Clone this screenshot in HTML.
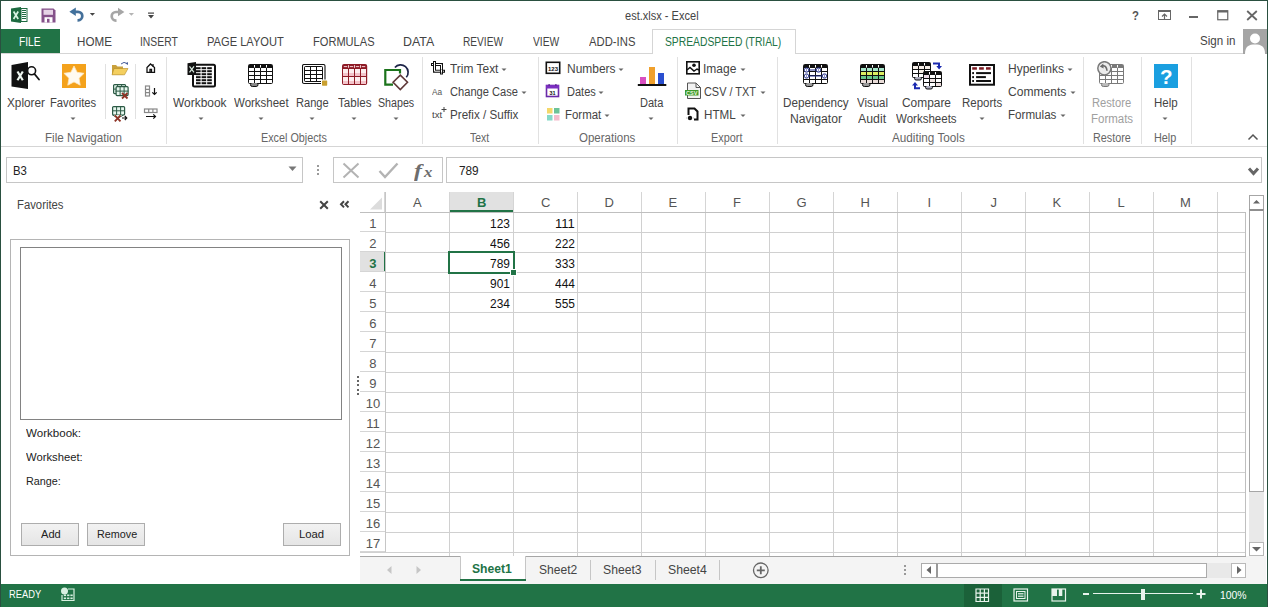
<!DOCTYPE html><html><head><meta charset="utf-8"><style>
html,body{margin:0;padding:0;width:1268px;height:607px;overflow:hidden;background:#fff}
body{position:relative;font-family:"Liberation Sans",sans-serif}
span{display:block}
</style></head><body>
<div style="position:absolute;left:0px;top:0px;width:1268px;height:607px;background:#fff"></div>
<span id="t0" style="position:absolute;left:625.00px;top:10.04px;font:normal 12px/12px 'Liberation Sans',sans-serif;color:#444;white-space:pre;transform:scaleX(0.9200);transform-origin:0 0;">est.xlsx - Excel</span>
<div style="position:absolute;left:0px;top:29px;width:60px;height:25px;background:#217346"></div>
<span id="t1" style="position:absolute;left:19.22px;top:35.30px;font:normal 13px/13px 'Liberation Sans',sans-serif;color:#fff;white-space:pre;transform:scaleX(0.7841);transform-origin:0 0;">FILE</span>
<span id="t2" style="position:absolute;left:76.51px;top:35.30px;font:normal 13px/13px 'Liberation Sans',sans-serif;color:#444;white-space:pre;transform:scaleX(0.8949);transform-origin:0 0;">HOME</span>
<span id="t3" style="position:absolute;left:140.20px;top:35.30px;font:normal 13px/13px 'Liberation Sans',sans-serif;color:#444;white-space:pre;transform:scaleX(0.7958);transform-origin:0 0;">INSERT</span>
<span id="t4" style="position:absolute;left:207.14px;top:35.30px;font:normal 13px/13px 'Liberation Sans',sans-serif;color:#444;white-space:pre;transform:scaleX(0.8551);transform-origin:0 0;">PAGE LAYOUT</span>
<span id="t5" style="position:absolute;left:313.15px;top:35.30px;font:normal 13px/13px 'Liberation Sans',sans-serif;color:#444;white-space:pre;transform:scaleX(0.8524);transform-origin:0 0;">FORMULAS</span>
<span id="t6" style="position:absolute;left:403.05px;top:35.30px;font:normal 13px/13px 'Liberation Sans',sans-serif;color:#444;white-space:pre;transform:scaleX(0.9542);transform-origin:0 0;">DATA</span>
<span id="t7" style="position:absolute;left:463.22px;top:35.30px;font:normal 13px/13px 'Liberation Sans',sans-serif;color:#444;white-space:pre;transform:scaleX(0.7802);transform-origin:0 0;">REVIEW</span>
<span id="t8" style="position:absolute;left:532.80px;top:35.30px;font:normal 13px/13px 'Liberation Sans',sans-serif;color:#444;white-space:pre;transform:scaleX(0.7893);transform-origin:0 0;">VIEW</span>
<span id="t9" style="position:absolute;left:589.00px;top:35.30px;font:normal 13px/13px 'Liberation Sans',sans-serif;color:#444;white-space:pre;transform:scaleX(0.8684);transform-origin:0 0;">ADD-INS</span>
<div style="position:absolute;left:0px;top:53px;width:1268px;height:1px;background:#d5d5d5"></div>
<div style="position:absolute;left:652px;top:29px;width:144px;height:25px;background:#fff;border:1px solid #d5d5d5;border-bottom:none;box-sizing:border-box"></div>
<span id="t10" style="position:absolute;left:665.00px;top:35.30px;font:normal 13px/13px 'Liberation Sans',sans-serif;color:#217346;white-space:pre;transform:scaleX(0.7928);transform-origin:0 0;">SPREADSPEED (TRIAL)</span>
<span id="t11" style="position:absolute;left:1200.30px;top:34.00px;font:normal 13px/13px 'Liberation Sans',sans-serif;color:#444;white-space:pre;transform:scaleX(0.8907);transform-origin:0 0;">Sign in</span>
<div style="position:absolute;left:0px;top:146px;width:1268px;height:1px;background:#d5d5d5"></div>
<div style="position:absolute;left:166px;top:57px;width:1px;height:87px;background:#e1e1e1"></div>
<div style="position:absolute;left:422px;top:57px;width:1px;height:87px;background:#e1e1e1"></div>
<div style="position:absolute;left:538px;top:57px;width:1px;height:87px;background:#e1e1e1"></div>
<div style="position:absolute;left:677px;top:57px;width:1px;height:87px;background:#e1e1e1"></div>
<div style="position:absolute;left:777px;top:57px;width:1px;height:87px;background:#e1e1e1"></div>
<div style="position:absolute;left:1083px;top:57px;width:1px;height:87px;background:#e1e1e1"></div>
<div style="position:absolute;left:1141px;top:57px;width:1px;height:87px;background:#e1e1e1"></div>
<div style="position:absolute;left:1191px;top:57px;width:1px;height:87px;background:#e1e1e1"></div>
<div style="position:absolute;left:105px;top:64px;width:1px;height:55px;background:#e1e1e1"></div>
<div style="position:absolute;left:135px;top:64px;width:1px;height:55px;background:#e1e1e1"></div>
<span id="t12" style="position:absolute;left:45.30px;top:131.84px;font:normal 12px/12px 'Liberation Sans',sans-serif;color:#666;white-space:pre;transform:scaleX(0.9695);transform-origin:0 0;">File Navigation</span>
<span id="t13" style="position:absolute;left:261.00px;top:131.84px;font:normal 12px/12px 'Liberation Sans',sans-serif;color:#666;white-space:pre;transform:scaleX(0.8997);transform-origin:0 0;">Excel Objects</span>
<span id="t14" style="position:absolute;left:470.00px;top:131.84px;font:normal 12px/12px 'Liberation Sans',sans-serif;color:#666;white-space:pre;transform:scaleX(0.8688);transform-origin:0 0;">Text</span>
<span id="t15" style="position:absolute;left:579.00px;top:131.84px;font:normal 12px/12px 'Liberation Sans',sans-serif;color:#666;white-space:pre;transform:scaleX(0.9591);transform-origin:0 0;">Operations</span>
<span id="t16" style="position:absolute;left:710.70px;top:131.84px;font:normal 12px/12px 'Liberation Sans',sans-serif;color:#666;white-space:pre;transform:scaleX(0.9053);transform-origin:0 0;">Export</span>
<span id="t17" style="position:absolute;left:892.30px;top:131.84px;font:normal 12px/12px 'Liberation Sans',sans-serif;color:#666;white-space:pre;transform:scaleX(0.9771);transform-origin:0 0;">Auditing Tools</span>
<span id="t18" style="position:absolute;left:1092.50px;top:131.84px;font:normal 12px/12px 'Liberation Sans',sans-serif;color:#666;white-space:pre;transform:scaleX(0.8998);transform-origin:0 0;">Restore</span>
<span id="t19" style="position:absolute;left:1154.40px;top:131.84px;font:normal 12px/12px 'Liberation Sans',sans-serif;color:#666;white-space:pre;transform:scaleX(0.9038);transform-origin:0 0;">Help</span>
<span id="t20" style="position:absolute;left:6.90px;top:96.64px;font:normal 12px/12px 'Liberation Sans',sans-serif;color:#444;white-space:pre;transform:scaleX(0.9796);transform-origin:0 0;">Xplorer</span>
<span id="t21" style="position:absolute;left:50.20px;top:96.64px;font:normal 12px/12px 'Liberation Sans',sans-serif;color:#444;white-space:pre;transform:scaleX(0.9362);transform-origin:0 0;">Favorites</span>
<span id="t22" style="position:absolute;left:173.20px;top:96.84px;font:normal 12px/12px 'Liberation Sans',sans-serif;color:#444;white-space:pre;transform:scaleX(0.9945);transform-origin:0 0;">Workbook</span>
<span id="t23" style="position:absolute;left:233.50px;top:96.84px;font:normal 12px/12px 'Liberation Sans',sans-serif;color:#444;white-space:pre;transform:scaleX(0.9567);transform-origin:0 0;">Worksheet</span>
<span id="t24" style="position:absolute;left:296.30px;top:96.84px;font:normal 12px/12px 'Liberation Sans',sans-serif;color:#444;white-space:pre;transform:scaleX(0.9247);transform-origin:0 0;">Range</span>
<span id="t25" style="position:absolute;left:338.40px;top:96.84px;font:normal 12px/12px 'Liberation Sans',sans-serif;color:#444;white-space:pre;transform:scaleX(0.9658);transform-origin:0 0;">Tables</span>
<span id="t26" style="position:absolute;left:378.30px;top:96.84px;font:normal 12px/12px 'Liberation Sans',sans-serif;color:#444;white-space:pre;transform:scaleX(0.8895);transform-origin:0 0;">Shapes</span>
<span id="t27" style="position:absolute;left:640.40px;top:96.84px;font:normal 12px/12px 'Liberation Sans',sans-serif;color:#444;white-space:pre;transform:scaleX(0.9192);transform-origin:0 0;">Data</span>
<span id="t28" style="position:absolute;left:783.20px;top:96.84px;font:normal 12px/12px 'Liberation Sans',sans-serif;color:#444;white-space:pre;transform:scaleX(0.9750);transform-origin:0 0;">Dependency</span>
<span id="t29" style="position:absolute;left:790.00px;top:112.84px;font:normal 12px/12px 'Liberation Sans',sans-serif;color:#444;white-space:pre;transform:scaleX(1.0124);transform-origin:0 0;">Navigator</span>
<span id="t30" style="position:absolute;left:857.00px;top:96.84px;font:normal 12px/12px 'Liberation Sans',sans-serif;color:#444;white-space:pre;transform:scaleX(0.9528);transform-origin:0 0;">Visual</span>
<span id="t31" style="position:absolute;left:858.00px;top:112.84px;font:normal 12px/12px 'Liberation Sans',sans-serif;color:#444;white-space:pre;transform:scaleX(1.0279);transform-origin:0 0;">Audit</span>
<span id="t32" style="position:absolute;left:902.00px;top:96.84px;font:normal 12px/12px 'Liberation Sans',sans-serif;color:#444;white-space:pre;transform:scaleX(0.9924);transform-origin:0 0;">Compare</span>
<span id="t33" style="position:absolute;left:896.40px;top:112.84px;font:normal 12px/12px 'Liberation Sans',sans-serif;color:#444;white-space:pre;transform:scaleX(0.9599);transform-origin:0 0;">Worksheets</span>
<span id="t34" style="position:absolute;left:962.00px;top:96.84px;font:normal 12px/12px 'Liberation Sans',sans-serif;color:#444;white-space:pre;transform:scaleX(0.9567);transform-origin:0 0;">Reports</span>
<span id="t35" style="position:absolute;left:1091.70px;top:96.84px;font:normal 12px/12px 'Liberation Sans',sans-serif;color:#a0a0a0;white-space:pre;transform:scaleX(0.9305);transform-origin:0 0;">Restore</span>
<span id="t36" style="position:absolute;left:1090.50px;top:112.84px;font:normal 12px/12px 'Liberation Sans',sans-serif;color:#a0a0a0;white-space:pre;transform:scaleX(0.9567);transform-origin:0 0;">Formats</span>
<span id="t37" style="position:absolute;left:1153.70px;top:96.84px;font:normal 12px/12px 'Liberation Sans',sans-serif;color:#444;white-space:pre;transform:scaleX(0.9598);transform-origin:0 0;">Help</span>
<span id="t38" style="position:absolute;left:449.70px;top:62.84px;font:normal 12px/12px 'Liberation Sans',sans-serif;color:#444;white-space:pre;transform:scaleX(0.9949);transform-origin:0 0;">Trim Text</span>
<span id="t39" style="position:absolute;left:449.70px;top:85.84px;font:normal 12px/12px 'Liberation Sans',sans-serif;color:#444;white-space:pre;transform:scaleX(0.9266);transform-origin:0 0;">Change Case</span>
<span id="t40" style="position:absolute;left:449.70px;top:109.14px;font:normal 12px/12px 'Liberation Sans',sans-serif;color:#444;white-space:pre;transform:scaleX(0.9692);transform-origin:0 0;">Prefix / Suffix</span>
<span id="t41" style="position:absolute;left:567.20px;top:62.84px;font:normal 12px/12px 'Liberation Sans',sans-serif;color:#444;white-space:pre;transform:scaleX(0.9984);transform-origin:0 0;">Numbers</span>
<span id="t42" style="position:absolute;left:567.20px;top:85.84px;font:normal 12px/12px 'Liberation Sans',sans-serif;color:#444;white-space:pre;transform:scaleX(0.9187);transform-origin:0 0;">Dates</span>
<span id="t43" style="position:absolute;left:564.60px;top:109.14px;font:normal 12px/12px 'Liberation Sans',sans-serif;color:#444;white-space:pre;transform:scaleX(0.9542);transform-origin:0 0;">Format</span>
<span id="t44" style="position:absolute;left:703.30px;top:62.84px;font:normal 12px/12px 'Liberation Sans',sans-serif;color:#444;white-space:pre;transform:scaleX(1.0007);transform-origin:0 0;">Image</span>
<span id="t45" style="position:absolute;left:704.30px;top:85.84px;font:normal 12px/12px 'Liberation Sans',sans-serif;color:#444;white-space:pre;transform:scaleX(0.9085);transform-origin:0 0;">CSV / TXT</span>
<span id="t46" style="position:absolute;left:704.30px;top:109.14px;font:normal 12px/12px 'Liberation Sans',sans-serif;color:#444;white-space:pre;transform:scaleX(0.9699);transform-origin:0 0;">HTML</span>
<span id="t47" style="position:absolute;left:1008.20px;top:62.84px;font:normal 12px/12px 'Liberation Sans',sans-serif;color:#444;white-space:pre;transform:scaleX(0.9979);transform-origin:0 0;">Hyperlinks</span>
<span id="t48" style="position:absolute;left:1008.20px;top:85.84px;font:normal 12px/12px 'Liberation Sans',sans-serif;color:#444;white-space:pre;transform:scaleX(1.0067);transform-origin:0 0;">Comments</span>
<span id="t49" style="position:absolute;left:1008.20px;top:109.14px;font:normal 12px/12px 'Liberation Sans',sans-serif;color:#444;white-space:pre;transform:scaleX(0.9678);transform-origin:0 0;">Formulas</span>
<div style="position:absolute;left:6px;top:157px;width:297px;height:26px;border:1px solid #c6c6c6;box-sizing:border-box;background:#fff"></div>
<span id="t50" style="position:absolute;left:13.40px;top:164.54px;font:normal 12px/12px 'Liberation Sans',sans-serif;color:#222;white-space:pre;transform:scaleX(0.9464);transform-origin:0 0;">B3</span>
<div style="position:absolute;left:333px;top:157px;width:110px;height:26px;border:1px solid #c6c6c6;box-sizing:border-box;background:#fff"></div>
<div style="position:absolute;left:446px;top:157px;width:816px;height:26px;border:1px solid #c6c6c6;box-sizing:border-box;background:#fff"></div>
<span id="t51" style="position:absolute;left:458.60px;top:164.64px;font:normal 12px/12px 'Liberation Sans',sans-serif;color:#222;white-space:pre;transform:scaleX(0.9829);transform-origin:0 0;">789</span>
<span id="t52" style="position:absolute;left:16.60px;top:198.84px;font:normal 12px/12px 'Liberation Sans',sans-serif;color:#444;white-space:pre;transform:scaleX(0.9423);transform-origin:0 0;">Favorites</span>
<div style="position:absolute;left:10px;top:239px;width:340px;height:317px;border:1px solid #b4b4b4;box-sizing:border-box"></div>
<div style="position:absolute;left:20px;top:247px;width:322px;height:173px;border:1px solid #828282;box-sizing:border-box"></div>
<span id="t53" style="position:absolute;left:25.50px;top:427.69px;font:normal 11px/11px 'Liberation Sans',sans-serif;color:#222;white-space:pre;transform:scaleX(1.0513);transform-origin:0 0;">Workbook:</span>
<span id="t54" style="position:absolute;left:25.50px;top:452.29px;font:normal 11px/11px 'Liberation Sans',sans-serif;color:#222;white-space:pre;transform:scaleX(1.0221);transform-origin:0 0;">Worksheet:</span>
<span id="t55" style="position:absolute;left:25.50px;top:476.19px;font:normal 11px/11px 'Liberation Sans',sans-serif;color:#222;white-space:pre;transform:scaleX(0.9798);transform-origin:0 0;">Range:</span>
<div style="position:absolute;left:21px;top:523px;width:58px;height:23px;border:1px solid #adadad;box-sizing:border-box;background:linear-gradient(#f2f2f2,#e5e5e5)"></div>
<span id="t56" style="position:absolute;left:40.60px;top:529.19px;font:normal 11px/11px 'Liberation Sans',sans-serif;color:#222;white-space:pre;transform:scaleX(1.0075);transform-origin:0 0;">Add</span>
<div style="position:absolute;left:87px;top:523px;width:58px;height:23px;border:1px solid #adadad;box-sizing:border-box;background:linear-gradient(#f2f2f2,#e5e5e5)"></div>
<span id="t57" style="position:absolute;left:96.50px;top:529.19px;font:normal 11px/11px 'Liberation Sans',sans-serif;color:#222;white-space:pre;transform:scaleX(0.9818);transform-origin:0 0;">Remove</span>
<div style="position:absolute;left:283px;top:523px;width:58px;height:23px;border:1px solid #adadad;box-sizing:border-box;background:linear-gradient(#f2f2f2,#e5e5e5)"></div>
<span id="t58" style="position:absolute;left:299.00px;top:529.19px;font:normal 11px/11px 'Liberation Sans',sans-serif;color:#222;white-space:pre;transform:scaleX(1.0266);transform-origin:0 0;">Load</span>
<div style="position:absolute;left:360px;top:192px;width:886px;height:20px;background:#fff"></div>
<div style="position:absolute;left:449px;top:192px;width:64px;height:20px;background:#e1e1e1"></div>
<div style="position:absolute;left:449px;top:210px;width:64px;height:2px;background:#217346"></div>
<div style="position:absolute;left:360px;top:252px;width:25px;height:20px;background:#e1e1e1"></div>
<div style="position:absolute;left:384px;top:252px;width:2px;height:20px;background:#217346"></div>
<div style="position:absolute;left:385px;top:212px;width:861px;height:344px;background-image:linear-gradient(to right,#d0d0d0 1px,transparent 1px),linear-gradient(to bottom,#d0d0d0 1px,transparent 1px);background-size:64px 20px;background-position:0 0"></div>
<div style="position:absolute;left:384px;top:192px;width:1px;height:20px;background:#d5d5d5"></div>
<div style="position:absolute;left:449px;top:192px;width:1px;height:20px;background:#d5d5d5"></div>
<div style="position:absolute;left:513px;top:192px;width:1px;height:20px;background:#d5d5d5"></div>
<div style="position:absolute;left:577px;top:192px;width:1px;height:20px;background:#d5d5d5"></div>
<div style="position:absolute;left:641px;top:192px;width:1px;height:20px;background:#d5d5d5"></div>
<div style="position:absolute;left:705px;top:192px;width:1px;height:20px;background:#d5d5d5"></div>
<div style="position:absolute;left:769px;top:192px;width:1px;height:20px;background:#d5d5d5"></div>
<div style="position:absolute;left:833px;top:192px;width:1px;height:20px;background:#d5d5d5"></div>
<div style="position:absolute;left:897px;top:192px;width:1px;height:20px;background:#d5d5d5"></div>
<div style="position:absolute;left:961px;top:192px;width:1px;height:20px;background:#d5d5d5"></div>
<div style="position:absolute;left:1025px;top:192px;width:1px;height:20px;background:#d5d5d5"></div>
<div style="position:absolute;left:1089px;top:192px;width:1px;height:20px;background:#d5d5d5"></div>
<div style="position:absolute;left:1153px;top:192px;width:1px;height:20px;background:#d5d5d5"></div>
<div style="position:absolute;left:1217px;top:192px;width:1px;height:20px;background:#d5d5d5"></div>
<div style="position:absolute;left:360px;top:212px;width:886px;height:1px;background:#bfbfbf"></div>
<div style="position:absolute;left:385px;top:192px;width:1px;height:364px;background:#c6c6c6"></div>
<div style="position:absolute;left:360px;top:552px;width:886px;height:1px;background:#d0d0d0"></div>
<div style="position:absolute;left:1245px;top:212px;width:1px;height:344px;background:#bfbfbf"></div>
<div style="position:absolute;left:385px;top:553px;width:860px;height:3px;background:#fff"></div>
<div style="position:absolute;left:449px;top:553px;width:1px;height:3px;background:#d0d0d0"></div>
<div style="position:absolute;left:513px;top:553px;width:1px;height:3px;background:#d0d0d0"></div>
<div style="position:absolute;left:577px;top:553px;width:1px;height:3px;background:#d0d0d0"></div>
<div style="position:absolute;left:641px;top:553px;width:1px;height:3px;background:#d0d0d0"></div>
<div style="position:absolute;left:705px;top:553px;width:1px;height:3px;background:#d0d0d0"></div>
<div style="position:absolute;left:769px;top:553px;width:1px;height:3px;background:#d0d0d0"></div>
<div style="position:absolute;left:833px;top:553px;width:1px;height:3px;background:#d0d0d0"></div>
<div style="position:absolute;left:897px;top:553px;width:1px;height:3px;background:#d0d0d0"></div>
<div style="position:absolute;left:961px;top:553px;width:1px;height:3px;background:#d0d0d0"></div>
<div style="position:absolute;left:1025px;top:553px;width:1px;height:3px;background:#d0d0d0"></div>
<div style="position:absolute;left:1089px;top:553px;width:1px;height:3px;background:#d0d0d0"></div>
<div style="position:absolute;left:1153px;top:553px;width:1px;height:3px;background:#d0d0d0"></div>
<div style="position:absolute;left:1217px;top:553px;width:1px;height:3px;background:#d0d0d0"></div>
<div style="position:absolute;left:360px;top:231px;width:25px;height:1px;background:#d5d5d5"></div>
<div style="position:absolute;left:360px;top:251px;width:25px;height:1px;background:#d5d5d5"></div>
<div style="position:absolute;left:360px;top:271px;width:25px;height:1px;background:#d5d5d5"></div>
<div style="position:absolute;left:360px;top:291px;width:25px;height:1px;background:#d5d5d5"></div>
<div style="position:absolute;left:360px;top:311px;width:25px;height:1px;background:#d5d5d5"></div>
<div style="position:absolute;left:360px;top:331px;width:25px;height:1px;background:#d5d5d5"></div>
<div style="position:absolute;left:360px;top:351px;width:25px;height:1px;background:#d5d5d5"></div>
<div style="position:absolute;left:360px;top:371px;width:25px;height:1px;background:#d5d5d5"></div>
<div style="position:absolute;left:360px;top:391px;width:25px;height:1px;background:#d5d5d5"></div>
<div style="position:absolute;left:360px;top:411px;width:25px;height:1px;background:#d5d5d5"></div>
<div style="position:absolute;left:360px;top:431px;width:25px;height:1px;background:#d5d5d5"></div>
<div style="position:absolute;left:360px;top:451px;width:25px;height:1px;background:#d5d5d5"></div>
<div style="position:absolute;left:360px;top:471px;width:25px;height:1px;background:#d5d5d5"></div>
<div style="position:absolute;left:360px;top:491px;width:25px;height:1px;background:#d5d5d5"></div>
<div style="position:absolute;left:360px;top:511px;width:25px;height:1px;background:#d5d5d5"></div>
<div style="position:absolute;left:360px;top:531px;width:25px;height:1px;background:#d5d5d5"></div>
<div style="position:absolute;left:360px;top:551px;width:25px;height:1px;background:#d5d5d5"></div>
<span id="t59" style="position:absolute;left:413.00px;top:196.20px;font:normal 13px/13px 'Liberation Sans',sans-serif;color:#555;white-space:pre;">A</span>
<span id="t60" style="position:absolute;left:477.00px;top:196.20px;font:bold 13px/13px 'Liberation Sans',sans-serif;color:#217346;white-space:pre;">B</span>
<span id="t61" style="position:absolute;left:541.00px;top:196.20px;font:normal 13px/13px 'Liberation Sans',sans-serif;color:#555;white-space:pre;">C</span>
<span id="t62" style="position:absolute;left:604.50px;top:196.20px;font:normal 13px/13px 'Liberation Sans',sans-serif;color:#555;white-space:pre;">D</span>
<span id="t63" style="position:absolute;left:668.50px;top:196.20px;font:normal 13px/13px 'Liberation Sans',sans-serif;color:#555;white-space:pre;">E</span>
<span id="t64" style="position:absolute;left:733.00px;top:196.20px;font:normal 13px/13px 'Liberation Sans',sans-serif;color:#555;white-space:pre;">F</span>
<span id="t65" style="position:absolute;left:796.50px;top:196.20px;font:normal 13px/13px 'Liberation Sans',sans-serif;color:#555;white-space:pre;">G</span>
<span id="t66" style="position:absolute;left:860.50px;top:196.20px;font:normal 13px/13px 'Liberation Sans',sans-serif;color:#555;white-space:pre;">H</span>
<span id="t67" style="position:absolute;left:927.50px;top:196.20px;font:normal 13px/13px 'Liberation Sans',sans-serif;color:#555;white-space:pre;">I</span>
<span id="t68" style="position:absolute;left:990.50px;top:196.20px;font:normal 13px/13px 'Liberation Sans',sans-serif;color:#555;white-space:pre;">J</span>
<span id="t69" style="position:absolute;left:1052.50px;top:196.20px;font:normal 13px/13px 'Liberation Sans',sans-serif;color:#555;white-space:pre;">K</span>
<span id="t70" style="position:absolute;left:1117.50px;top:196.20px;font:normal 13px/13px 'Liberation Sans',sans-serif;color:#555;white-space:pre;">L</span>
<span id="t71" style="position:absolute;left:1180.00px;top:196.20px;font:normal 13px/13px 'Liberation Sans',sans-serif;color:#555;white-space:pre;">M</span>
<span id="t72" style="position:absolute;left:369.30px;top:217.40px;font:normal 13px/13px 'Liberation Sans',sans-serif;color:#555;white-space:pre;">1</span>
<span id="t73" style="position:absolute;left:369.30px;top:237.40px;font:normal 13px/13px 'Liberation Sans',sans-serif;color:#555;white-space:pre;">2</span>
<span id="t74" style="position:absolute;left:369.30px;top:257.40px;font:bold 13px/13px 'Liberation Sans',sans-serif;color:#217346;white-space:pre;">3</span>
<span id="t75" style="position:absolute;left:369.30px;top:277.40px;font:normal 13px/13px 'Liberation Sans',sans-serif;color:#555;white-space:pre;">4</span>
<span id="t76" style="position:absolute;left:369.30px;top:297.40px;font:normal 13px/13px 'Liberation Sans',sans-serif;color:#555;white-space:pre;">5</span>
<span id="t77" style="position:absolute;left:369.30px;top:317.40px;font:normal 13px/13px 'Liberation Sans',sans-serif;color:#555;white-space:pre;">6</span>
<span id="t78" style="position:absolute;left:369.30px;top:337.40px;font:normal 13px/13px 'Liberation Sans',sans-serif;color:#555;white-space:pre;">7</span>
<span id="t79" style="position:absolute;left:369.30px;top:357.40px;font:normal 13px/13px 'Liberation Sans',sans-serif;color:#555;white-space:pre;">8</span>
<span id="t80" style="position:absolute;left:369.30px;top:377.40px;font:normal 13px/13px 'Liberation Sans',sans-serif;color:#555;white-space:pre;">9</span>
<span id="t81" style="position:absolute;left:365.69px;top:397.40px;font:normal 13px/13px 'Liberation Sans',sans-serif;color:#555;white-space:pre;">10</span>
<span id="t82" style="position:absolute;left:366.17px;top:417.40px;font:normal 13px/13px 'Liberation Sans',sans-serif;color:#555;white-space:pre;">11</span>
<span id="t83" style="position:absolute;left:365.69px;top:437.40px;font:normal 13px/13px 'Liberation Sans',sans-serif;color:#555;white-space:pre;">12</span>
<span id="t84" style="position:absolute;left:365.69px;top:457.40px;font:normal 13px/13px 'Liberation Sans',sans-serif;color:#555;white-space:pre;">13</span>
<span id="t85" style="position:absolute;left:365.69px;top:477.40px;font:normal 13px/13px 'Liberation Sans',sans-serif;color:#555;white-space:pre;">14</span>
<span id="t86" style="position:absolute;left:365.69px;top:497.40px;font:normal 13px/13px 'Liberation Sans',sans-serif;color:#555;white-space:pre;">15</span>
<span id="t87" style="position:absolute;left:365.69px;top:517.40px;font:normal 13px/13px 'Liberation Sans',sans-serif;color:#555;white-space:pre;">16</span>
<span id="t88" style="position:absolute;left:365.69px;top:537.40px;font:normal 13px/13px 'Liberation Sans',sans-serif;color:#555;white-space:pre;">17</span>
<span id="t89" style="position:absolute;left:490.40px;top:218.24px;font:normal 12px/12px 'Liberation Sans',sans-serif;color:#111;white-space:pre;transform:scaleX(0.9927);transform-origin:0 0;">123</span>
<span id="t90" style="position:absolute;left:554.60px;top:218.24px;font:normal 12px/12px 'Liberation Sans',sans-serif;color:#111;white-space:pre;transform:scaleX(1.0880);transform-origin:0 0;">111</span>
<span id="t91" style="position:absolute;left:490.40px;top:238.24px;font:normal 12px/12px 'Liberation Sans',sans-serif;color:#111;white-space:pre;transform:scaleX(0.9927);transform-origin:0 0;">456</span>
<span id="t92" style="position:absolute;left:554.60px;top:238.24px;font:normal 12px/12px 'Liberation Sans',sans-serif;color:#111;white-space:pre;transform:scaleX(0.9927);transform-origin:0 0;">222</span>
<span id="t93" style="position:absolute;left:490.40px;top:258.24px;font:normal 12px/12px 'Liberation Sans',sans-serif;color:#111;white-space:pre;transform:scaleX(0.9927);transform-origin:0 0;">789</span>
<span id="t94" style="position:absolute;left:554.60px;top:258.24px;font:normal 12px/12px 'Liberation Sans',sans-serif;color:#111;white-space:pre;transform:scaleX(0.9927);transform-origin:0 0;">333</span>
<span id="t95" style="position:absolute;left:490.40px;top:278.24px;font:normal 12px/12px 'Liberation Sans',sans-serif;color:#111;white-space:pre;transform:scaleX(0.9927);transform-origin:0 0;">901</span>
<span id="t96" style="position:absolute;left:554.60px;top:278.24px;font:normal 12px/12px 'Liberation Sans',sans-serif;color:#111;white-space:pre;transform:scaleX(0.9927);transform-origin:0 0;">444</span>
<span id="t97" style="position:absolute;left:490.40px;top:298.24px;font:normal 12px/12px 'Liberation Sans',sans-serif;color:#111;white-space:pre;transform:scaleX(0.9927);transform-origin:0 0;">234</span>
<span id="t98" style="position:absolute;left:554.60px;top:298.24px;font:normal 12px/12px 'Liberation Sans',sans-serif;color:#111;white-space:pre;transform:scaleX(0.9927);transform-origin:0 0;">555</span>
<div style="position:absolute;left:448px;top:251px;width:67px;height:23px;border:2px solid #217346;box-sizing:border-box"></div>
<div style="position:absolute;left:510px;top:269px;width:7px;height:7px;background:#217346;border:1px solid #fff;box-sizing:border-box"></div>
<div style="position:absolute;left:1249px;top:195px;width:15px;height:361px;background:#e9e9e9"></div>
<div style="position:absolute;left:1249px;top:195px;width:15px;height:16px;background:#fff;border:1px solid #a6a6a6;box-sizing:border-box"></div>
<div style="position:absolute;left:1249px;top:209px;width:15px;height:283px;background:#fff;border:1px solid #a6a6a6;border-top:2px solid #8f8f8f;box-sizing:border-box"></div>
<div style="position:absolute;left:1249px;top:542px;width:15px;height:14px;background:#fff;border:1px solid #b9b9b9;box-sizing:border-box"></div>
<div style="position:absolute;left:360px;top:556px;width:906px;height:28px;background:#f4f4f4"></div>
<div style="position:absolute;left:360px;top:556px;width:886px;height:1px;background:#a6a6a6"></div>
<div style="position:absolute;left:460px;top:556px;width:66px;height:25px;background:#fff;border:1px solid #c6c6c6;border-top:none;box-sizing:border-box"></div>
<div style="position:absolute;left:460px;top:579px;width:66px;height:2px;background:#217346"></div>
<span id="t99" style="position:absolute;left:472.20px;top:562.40px;font:bold 13px/13px 'Liberation Sans',sans-serif;color:#217346;white-space:pre;transform:scaleX(0.9339);transform-origin:0 0;">Sheet1</span>
<span id="t100" style="position:absolute;left:538.50px;top:563.20px;font:normal 13px/13px 'Liberation Sans',sans-serif;color:#444;white-space:pre;transform:scaleX(0.9274);transform-origin:0 0;">Sheet2</span>
<span id="t101" style="position:absolute;left:603.00px;top:563.20px;font:normal 13px/13px 'Liberation Sans',sans-serif;color:#444;white-space:pre;transform:scaleX(0.9372);transform-origin:0 0;">Sheet3</span>
<span id="t102" style="position:absolute;left:668.00px;top:563.20px;font:normal 13px/13px 'Liberation Sans',sans-serif;color:#444;white-space:pre;transform:scaleX(0.9421);transform-origin:0 0;">Sheet4</span>
<div style="position:absolute;left:590px;top:560px;width:1px;height:20px;background:#c6c6c6"></div>
<div style="position:absolute;left:655px;top:560px;width:1px;height:20px;background:#c6c6c6"></div>
<div style="position:absolute;left:719px;top:560px;width:1px;height:20px;background:#c6c6c6"></div>
<div style="position:absolute;left:921px;top:563px;width:325px;height:15px;background:#e9e9e9"></div>
<div style="position:absolute;left:921px;top:563px;width:16px;height:15px;background:#fff;border:1px solid #ababab;box-sizing:border-box"></div>
<div style="position:absolute;left:936px;top:563px;width:271px;height:15px;background:#fff;border:1px solid #ababab;border-left:2px solid #9a9a9a;box-sizing:border-box"></div>
<div style="position:absolute;left:1231px;top:563px;width:15px;height:15px;background:#fff;border:1px solid #b9b9b9;box-sizing:border-box"></div>
<div style="position:absolute;left:0px;top:584px;width:1268px;height:23px;background:#217346"></div>
<span id="t103" style="position:absolute;left:8.50px;top:589.39px;font:normal 11px/11px 'Liberation Sans',sans-serif;color:#fff;white-space:pre;transform:scaleX(0.8480);transform-origin:0 0;">READY</span>
<div style="position:absolute;left:964px;top:584px;width:38px;height:23px;background:#1b6139"></div>
<span id="t104" style="position:absolute;left:1220.40px;top:589.99px;font:normal 11px/11px 'Liberation Sans',sans-serif;color:#fff;white-space:pre;transform:scaleX(0.9452);transform-origin:0 0;">100%</span>
<svg style="position:absolute;left:10px;top:7px" width="18" height="17" viewBox="0 0 18 17"><polygon points="1,1.5 11,0 11,16 1,14.5" fill="#1d6b40"/><rect x="11" y="1.5" width="6" height="13" fill="#fff" stroke="#1d6b40" stroke-width="1"/><rect x="12" y="3" width="4" height="1" fill="#1d6b40"/><rect x="12" y="5" width="4" height="1" fill="#1d6b40"/><rect x="12" y="7" width="4" height="1" fill="#1d6b40"/><rect x="12" y="9" width="4" height="1" fill="#1d6b40"/><rect x="12" y="11" width="4" height="1" fill="#1d6b40"/><path d="M3.6,4.5 L8.2,12 M8.2,4.5 L3.6,12" stroke="#d9f5e3" stroke-width="1.7"/></svg>
<svg style="position:absolute;left:41px;top:8px" width="15" height="15" viewBox="0 0 15 15"><path d="M0.5,0.5 H12.5 L14.5,2.5 V14.5 H0.5 Z" fill="#85518a"/><rect x="2.5" y="1.8" width="9.5" height="5" fill="#e6d3e6"/><rect x="3.5" y="9.2" width="8" height="5.3" fill="#fff"/><rect x="6" y="10.8" width="2.5" height="3.7" fill="#85518a"/></svg>
<svg style="position:absolute;left:69px;top:7px" width="28" height="16" viewBox="0 0 28 16"><path d="M5,4.8 H9 A4.3,4.3 0 0 1 9,13.4 H8.5" fill="none" stroke="#44709a" stroke-width="2.7"/><polygon points="0.4,4.8 6.8,0.6 6.8,9" fill="#41719c"/><polygon points="20.8,6 26,6 23.4,8.7" fill="#444"/></svg>
<svg style="position:absolute;left:108px;top:7px" width="28" height="16" viewBox="0 0 28 16"><path d="M12,5 H8 A4.3,4.3 0 0 0 8,13.6 H8.5" fill="none" stroke="#a6a6a6" stroke-width="2.7"/><polygon points="16.4,5 10,0.8 10,9.2" fill="#a6a6a6"/><polygon points="20.8,6 26,6 23.4,8.7" fill="#b4b4b4"/></svg>
<svg style="position:absolute;left:147px;top:12px" width="9" height="8" viewBox="0 0 9 8"><rect x="1" y="0.5" width="6" height="1.2" fill="#444"/><polygon points="1,3 7,3 4,6.5" fill="#444"/></svg>
<span id="t105" style="position:absolute;left:1132.00px;top:8.60px;font:bold 13px/13px 'Liberation Sans',sans-serif;color:#555;white-space:pre;transform:scaleX(0.8750);transform-origin:0 0;">?</span>
<svg style="position:absolute;left:1157px;top:10px" width="15" height="11" viewBox="0 0 15 11"><rect x="1.5" y="0.5" width="12" height="9" fill="none" stroke="#666" stroke-width="1"/><rect x="1" y="0" width="13" height="2" fill="#666"/><path d="M7.5,9.5 V4 M5,6.5 L7.5,4 L10,6.5" fill="none" stroke="#666" stroke-width="1.2"/></svg>
<div style="position:absolute;left:1189px;top:16px;width:9px;height:2px;background:#666"></div>
<svg style="position:absolute;left:1217px;top:10px" width="12" height="11" viewBox="0 0 12 11"><rect x="0.75" y="0.75" width="10" height="9" fill="none" stroke="#666" stroke-width="1.2"/><rect x="0.5" y="0.5" width="10.5" height="2" fill="#666"/></svg>
<svg style="position:absolute;left:1246px;top:10px" width="12" height="11" viewBox="0 0 12 11"><path d="M1.2,1 L10.8,10 M10.8,1 L1.2,10" stroke="#666" stroke-width="1.8"/></svg>
<svg style="position:absolute;left:1243px;top:29px" width="24" height="25" viewBox="0 0 24 25"><rect width="24" height="25" fill="#a5a5a5"/><circle cx="12" cy="9.5" r="5" fill="#fff"/><path d="M2,25 C2,17 6,15.5 12,15.5 C18,15.5 22,17 22,25 Z" fill="#fff"/></svg>
<svg style="position:absolute;left:11px;top:61px" width="30" height="29" viewBox="0 0 30 29"><polygon points="0.5,4 17,1 17,28 0.5,25.5" fill="#111"/><path d="M6.5,10.5 L11.8,19.2 M11.8,10.5 L6.5,19.2" stroke="#eef6f0" stroke-width="2.2"/><circle cx="20.6" cy="9.8" r="4" fill="#fff" stroke="#111" stroke-width="1.6"/><path d="M23.5,13 L28,18.5" stroke="#111" stroke-width="1.8" stroke-linecap="round"/></svg>
<svg style="position:absolute;left:62px;top:64px" width="24" height="24" viewBox="0 0 24 24"><rect width="24" height="24" fill="#f4a21c"/><polygon points="12.00,2.00 15.12,8.31 22.08,9.32 17.04,14.24 18.23,21.18 12.00,17.90 5.77,21.18 6.96,14.24 1.92,9.32 8.88,8.31" fill="#fffaf0" stroke="#fde6bd" stroke-width="0.8" stroke-linejoin="round"/></svg>
<svg style="position:absolute;left:111px;top:61px" width="18" height="15" viewBox="0 0 18 15"><path d="M1,4 H5 L6.5,5.5 H12 V13.5 H1 Z" fill="#c9a13c"/><path d="M3,7.5 H17 L13.5,13.8 H1 Z" fill="#f4cf5f" stroke="#b48a24" stroke-width="0.6"/><path d="M10,3 Q13,0 16,2.5" fill="none" stroke="#4a5f9a" stroke-width="1"/><polygon points="17,4 14.5,2.5 17,1" fill="#4a5f9a"/></svg>
<svg style="position:absolute;left:112px;top:83px" width="17" height="17" viewBox="0 0 17 17"><rect x="1.6" y="1.6" width="12" height="9.0" rx="1" fill="#e6f6ee" stroke="#2c5a45" stroke-width="1.2"/><rect x="5.1" y="1" width="1" height="10.0" fill="#2c5a45"/><rect x="9.1" y="1" width="1" height="10.0" fill="#2c5a45"/><rect x="1" y="5.6" width="13" height="1" fill="#2c5a45"/><rect x="4.1" y="3.6" width="12" height="9.0" rx="1" fill="#e6f6ee" stroke="#2c5a45" stroke-width="1.2"/><rect x="7.6" y="3" width="1" height="10.0" fill="#2c5a45"/><rect x="11.6" y="3" width="1" height="10.0" fill="#2c5a45"/><rect x="3.5" y="7.6" width="13" height="1" fill="#2c5a45"/><path d="M10,10 L15.5,15.5 M15.5,10 L10,15.5" stroke="#8e3426" stroke-width="1.8"/></svg>
<svg style="position:absolute;left:111px;top:105px" width="18" height="17" viewBox="0 0 18 17"><rect x="1.6" y="1.6" width="12" height="8.4" rx="1" fill="#e6f6ee" stroke="#2c5a45" stroke-width="1.2"/><rect x="5.1" y="1" width="1" height="9.4" fill="#2c5a45"/><rect x="9.1" y="1" width="1" height="9.4" fill="#2c5a45"/><rect x="1" y="5.300000000000001" width="13" height="1" fill="#2c5a45"/><path d="M1.5,10 L7,13 L12.5,10" fill="#e6f6ee" stroke="#2c5a45" stroke-width="1"/><path d="M3.8,10.3 L9.5,16.3 M9.5,10.3 L3.8,16.3" stroke="#8e3426" stroke-width="1.8"/><path d="M11,13 H15.8 M13.8,11 L15.8,13 L13.8,15" fill="none" stroke="#111" stroke-width="1.1"/></svg>
<svg style="position:absolute;left:146px;top:63px" width="10" height="10" viewBox="0 0 10 10"><path d="M1,9.5 V4.5 L4.5,1 L8.5,4.5 V9.5 Z M4,9.5 V6.5 H5.5 V9.5" fill="none" stroke="#111" stroke-width="1.3"/><path d="M7,1 V3.5" stroke="#111" stroke-width="1.2"/></svg>
<svg style="position:absolute;left:144px;top:85px" width="14" height="12" viewBox="0 0 14 12"><rect x="1.5" y="1" width="4" height="10" fill="#fff" stroke="#888" stroke-width="1.2"/><path d="M1.5,4.3 H5.5 M1.5,7.6 H5.5" stroke="#888" stroke-width="1.2"/><path d="M10.5,3 V9.5 M8.3,7.3 L10.5,9.5 L12.7,7.3" fill="none" stroke="#111" stroke-width="1.2"/></svg>
<svg style="position:absolute;left:143px;top:108px" width="15" height="12" viewBox="0 0 15 12"><rect x="1.5" y="1" width="12.5" height="3.5" fill="#fff" stroke="#888" stroke-width="1.2"/><path d="M5.7,1 V4.5 M9.9,1 V4.5" stroke="#888" stroke-width="1.2"/><path d="M3,8.5 H12.5 M10.3,6.3 L12.5,8.5 L10.3,10.7" fill="none" stroke="#111" stroke-width="1.2"/></svg>
<svg style="position:absolute;left:187px;top:62px" width="29" height="26" viewBox="0 0 29 26"><rect x="6" y="2.8" width="22" height="21.8" rx="1.5" fill="#fff" stroke="#111" stroke-width="2"/><rect x="9.0" y="5.2" width="4.6" height="2" fill="#111"/><rect x="9.0" y="8.2" width="4.6" height="2" fill="#111"/><rect x="9.0" y="11.2" width="4.6" height="2" fill="#111"/><rect x="9.0" y="14.2" width="4.6" height="2" fill="#111"/><rect x="9.0" y="17.2" width="4.6" height="2" fill="#111"/><rect x="9.0" y="20.2" width="4.6" height="2" fill="#111"/><rect x="14.6" y="5.2" width="4.6" height="2" fill="#111"/><rect x="14.6" y="8.2" width="4.6" height="2" fill="#111"/><rect x="14.6" y="11.2" width="4.6" height="2" fill="#111"/><rect x="14.6" y="14.2" width="4.6" height="2" fill="#111"/><rect x="14.6" y="17.2" width="4.6" height="2" fill="#111"/><rect x="14.6" y="20.2" width="4.6" height="2" fill="#111"/><rect x="20.2" y="5.2" width="4.6" height="2" fill="#111"/><rect x="20.2" y="8.2" width="4.6" height="2" fill="#111"/><rect x="20.2" y="11.2" width="4.6" height="2" fill="#111"/><rect x="20.2" y="14.2" width="4.6" height="2" fill="#111"/><rect x="20.2" y="17.2" width="4.6" height="2" fill="#111"/><rect x="20.2" y="20.2" width="4.6" height="2" fill="#111"/><polygon points="0.5,1.2 9,0 9,13 0.5,13" fill="#111"/><path d="M2.5,4.3 L7,10.3 M7,4.3 L2.5,10.3" stroke="#d8eadf" stroke-width="1.2"/></svg>
<svg style="position:absolute;left:248px;top:64px" width="26" height="24" viewBox="0 0 26 24"><rect x="0" y="0" width="25" height="20" rx="2.2" fill="#111"/><rect x="2.5" y="18.5" width="7.5" height="4" rx="1.8" fill="#888" stroke="#111" stroke-width="1"/><rect x="6" y="1" width="1" height="2.5" fill="#fff"/><rect x="12" y="1" width="1" height="2.5" fill="#fff"/><rect x="18" y="1" width="1" height="2.5" fill="#fff"/><rect x="1" y="4" width="5" height="3" fill="#fff"/><rect x="7" y="4" width="5" height="3" fill="#fff"/><rect x="13" y="4" width="5" height="3" fill="#fff"/><rect x="19" y="4" width="5" height="3" fill="#fff"/><rect x="1" y="8" width="5" height="3" fill="#fff"/><rect x="7" y="8" width="5" height="3" fill="#fff"/><rect x="13" y="8" width="5" height="3" fill="#fff"/><rect x="19" y="8" width="5" height="3" fill="#fff"/><rect x="1" y="12" width="5" height="3" fill="#fff"/><rect x="7" y="12" width="5" height="3" fill="#fff"/><rect x="13" y="12" width="5" height="3" fill="#fff"/><rect x="19" y="12" width="5" height="3" fill="#fff"/><rect x="1" y="16" width="5" height="3" fill="#fff"/><rect x="7" y="16" width="5" height="3" fill="#fff"/><rect x="13" y="16" width="5" height="3" fill="#fff"/><rect x="19" y="16" width="5" height="3" fill="#fff"/></svg>
<svg style="position:absolute;left:302px;top:64px" width="27" height="23" viewBox="0 0 27 23"><rect x="0.5" y="0.5" width="22.5" height="19" rx="1.5" fill="#fff" stroke="#111" stroke-width="1.1"/><rect x="2" y="2" width="19" height="16" rx="2" fill="#111"/><rect x="3" y="3" width="5" height="3" fill="#fff"/><rect x="9" y="3" width="5" height="3" fill="#fff"/><rect x="15" y="3" width="5" height="3" fill="#fff"/><rect x="3" y="7" width="5" height="3" fill="#fff"/><rect x="9" y="7" width="5" height="3" fill="#fff"/><rect x="15" y="7" width="5" height="3" fill="#fff"/><rect x="3" y="11" width="5" height="3" fill="#fff"/><rect x="9" y="11" width="5" height="3" fill="#fff"/><rect x="15" y="11" width="5" height="3" fill="#fff"/><rect x="3" y="15" width="5" height="2" fill="#fff"/><rect x="9" y="15" width="5" height="2" fill="#fff"/><rect x="15" y="15" width="5" height="2" fill="#fff"/><rect x="19" y="15.5" width="7.5" height="7.5" fill="#fff"/><rect x="20" y="16.5" width="5.2" height="5.2" rx="0.6" fill="#c9a031"/></svg>
<svg style="position:absolute;left:342px;top:64px" width="26" height="22" viewBox="0 0 26 22"><rect x="0" y="0" width="25.2" height="21" rx="2" fill="#8e1b26"/><rect x="1.8" y="2.1" width="3.4" height="1" fill="#f4d0d4"/><rect x="7.8" y="2.1" width="3.4" height="1" fill="#f4d0d4"/><rect x="13.8" y="2.1" width="3.4" height="1" fill="#f4d0d4"/><rect x="19.8" y="2.1" width="3.4" height="1" fill="#f4d0d4"/><rect x="6" y="1.2" width="1" height="2.6" fill="#f4d0d4"/><rect x="12" y="1.2" width="1" height="2.6" fill="#f4d0d4"/><rect x="18" y="1.2" width="1" height="2.6" fill="#f4d0d4"/><rect x="1" y="5" width="5" height="7" fill="#fdeeee"/><rect x="1" y="9" width="5" height="3" fill="#f3c4ca"/><rect x="7" y="5" width="5" height="7" fill="#fdeeee"/><rect x="7" y="9" width="5" height="3" fill="#f3c4ca"/><rect x="13" y="5" width="5" height="7" fill="#fdeeee"/><rect x="13" y="9" width="5" height="3" fill="#f3c4ca"/><rect x="19" y="5" width="5" height="7" fill="#fdeeee"/><rect x="19" y="9" width="5" height="3" fill="#f3c4ca"/><rect x="1" y="13" width="5" height="7" fill="#fdeeee"/><rect x="1" y="17" width="5" height="3" fill="#f3c4ca"/><rect x="7" y="13" width="5" height="7" fill="#fdeeee"/><rect x="7" y="17" width="5" height="3" fill="#f3c4ca"/><rect x="13" y="13" width="5" height="7" fill="#fdeeee"/><rect x="13" y="17" width="5" height="3" fill="#f3c4ca"/><rect x="19" y="13" width="5" height="7" fill="#fdeeee"/><rect x="19" y="17" width="5" height="3" fill="#f3c4ca"/></svg>
<svg style="position:absolute;left:380px;top:58px" width="34" height="34" viewBox="0 0 34 34"><path d="M14.9,9.5 A7.2,7.2 0 1 1 26.3,19.3" fill="none" stroke="#1c2448" stroke-width="1.7"/><path d="M20,15.5 V12 H5.3 V26.6 H13" fill="none" stroke="#1b731b" stroke-width="2.2"/><polygon points="20.3,17.1 27.5,24.3 20.3,31.5 13.1,24.3" fill="#fff" stroke="#5e3838" stroke-width="1.6"/></svg>
<svg style="position:absolute;left:430px;top:60px" width="17" height="17" viewBox="0 0 17 17"><path d="M1,4.5 H11.5 V14.5" fill="none" stroke="#111" stroke-width="3"/><path d="M2,4.5 H11.5 V13.5" fill="none" stroke="#fff" stroke-width="1"/><path d="M4.5,1 V11.2 H15" fill="none" stroke="#111" stroke-width="3"/><path d="M4.5,2 V11.2 H14" fill="none" stroke="#fff" stroke-width="1"/><path d="M11.5,9.7 V12.7" stroke="#111" stroke-width="3"/><path d="M11.5,9.7 V12.7" stroke="#fff" stroke-width="1"/></svg>
<span id="t106" style="position:absolute;left:432.30px;top:87.80px;font:normal 8.5px/8.5px 'Liberation Sans',sans-serif;color:#555;white-space:pre;transform:scaleX(0.9747);transform-origin:0 0;">Aa</span>
<span id="t107" style="position:absolute;left:431.80px;top:110.60px;font:normal 8.5px/8.5px 'Liberation Sans',sans-serif;color:#444;white-space:pre;transform:scaleX(1.1340);transform-origin:0 0;">txt</span>
<svg style="position:absolute;left:441px;top:107px" width="6" height="5" viewBox="0 0 6 5"><path d="M0.5,2.5 H5.5 M3,0 V5" stroke="#444" stroke-width="1"/></svg>
<svg style="position:absolute;left:545px;top:61px" width="16" height="14" viewBox="0 0 16 14"><rect x="1.3" y="1.3" width="13.4" height="11" fill="#fff" stroke="#111" stroke-width="1.6"/><text x="8" y="9.6" font-family="Liberation Sans" font-weight="bold" font-size="6" fill="#111" text-anchor="middle">123</text></svg>
<svg style="position:absolute;left:545px;top:84px" width="15" height="14" viewBox="0 0 15 14"><rect x="1.5" y="1.5" width="12" height="11" fill="#fff" stroke="#6a2aa8" stroke-width="1.6"/><rect x="1" y="1" width="13" height="3.5" fill="#7b2fc0"/><rect x="3.5" y="0" width="1.2" height="2" fill="#5a1f90"/><rect x="10.3" y="0" width="1.2" height="2" fill="#5a1f90"/><text x="7.5" y="11" font-family="Liberation Sans" font-weight="bold" font-size="5.5" fill="#111" text-anchor="middle">31</text></svg>
<svg style="position:absolute;left:546px;top:107px" width="14" height="14" viewBox="0 0 14 14"><rect x="1" y="1" width="5.5" height="5.5" fill="#f4d86a"/><rect x="8" y="1" width="5.5" height="5.5" fill="#6cc398"/><rect x="1" y="8" width="5.5" height="5.5" fill="#86d9c8"/><rect x="8" y="8" width="5.5" height="5.5" fill="#f4bccc"/></svg>
<svg style="position:absolute;left:637px;top:66px" width="30" height="21" viewBox="0 0 30 21"><rect x="3" y="11" width="6" height="7" fill="#d94fc0"/><rect x="12" y="1" width="6" height="17" fill="#f0a02c"/><rect x="21" y="7" width="6" height="11" fill="#2a4fd0"/><rect x="0.8" y="18" width="28.5" height="2" fill="#111"/></svg>
<svg style="position:absolute;left:685px;top:60px" width="16" height="16" viewBox="0 0 16 16"><rect x="1.8" y="1.8" width="12.4" height="12" fill="#fff" stroke="#111" stroke-width="1.6"/><circle cx="9" cy="5.3" r="1.8" fill="#111"/><path d="M2,10 L5,7.5 L9,11 L12,9 L14,10" fill="none" stroke="#111" stroke-width="1.5"/></svg>
<svg style="position:absolute;left:684px;top:82px" width="18" height="18" viewBox="0 0 18 18"><path d="M3.5,1 H12 L16.5,5.5 V16.5 H3.5 Z" fill="#f2f2f2" stroke="#555" stroke-width="1"/><path d="M12,1 V5.5 H16.5" fill="none" stroke="#555" stroke-width="1"/><rect x="1" y="8" width="13.5" height="5.5" fill="#3c9a2a"/><text x="7.7" y="12.7" font-family="Liberation Sans" font-weight="bold" font-size="5.5" fill="#e9f5e0" text-anchor="middle">CSV</text></svg>
<svg style="position:absolute;left:686px;top:107px" width="14" height="15" viewBox="0 0 14 15"><path d="M2.5,8 V1.5 H8.5 L11.5,4.5 V12.5 H8" fill="none" stroke="#111" stroke-width="2"/><circle cx="4" cy="11" r="2.2" fill="#111"/><path d="M0.5,11 H1.2 M6.8,11 H7.5" stroke="#777" stroke-width="1"/></svg>
<svg style="position:absolute;left:803px;top:64px" width="26" height="24" viewBox="0 0 26 24"><rect x="0" y="0" width="25" height="20" rx="2.2" fill="#111"/><rect x="2.5" y="18.5" width="7.5" height="4" rx="1.8" fill="#999" stroke="#111" stroke-width="1"/><rect x="6" y="1" width="1" height="2.5" fill="#fff"/><rect x="12" y="1" width="1" height="2.5" fill="#fff"/><rect x="18" y="1" width="1" height="2.5" fill="#fff"/><rect x="1" y="4" width="5" height="3" fill="#fff"/><rect x="7" y="4" width="5" height="3" fill="#fff"/><rect x="13" y="4" width="5" height="3" fill="#fff"/><rect x="19" y="4" width="5" height="3" fill="#fff"/><rect x="1" y="8" width="5" height="3" fill="#fff"/><rect x="7" y="8" width="5" height="3" fill="#fff"/><rect x="13" y="8" width="5" height="3" fill="#fff"/><rect x="19" y="8" width="5" height="3" fill="#fff"/><rect x="1" y="12" width="5" height="3" fill="#fff"/><rect x="7" y="12" width="5" height="3" fill="#fff"/><rect x="13" y="12" width="5" height="3" fill="#fff"/><rect x="19" y="12" width="5" height="3" fill="#fff"/><rect x="1" y="16" width="5" height="3" fill="#fff"/><rect x="7" y="16" width="5" height="3" fill="#fff"/><rect x="13" y="16" width="5" height="3" fill="#fff"/><rect x="19" y="16" width="5" height="3" fill="#fff"/><rect x="5" y="5.5" width="9" height="1" fill="#1e2a8a"/><rect x="5" y="11.5" width="15" height="1" fill="#1e2a8a"/><rect x="1.5" y="4" width="4" height="4" rx="1.5" fill="#fff" stroke="#1e2a8a" stroke-width="1"/><rect x="3.0" y="5.5" width="1" height="1" fill="#1e2a8a"/><rect x="13.5" y="4" width="4" height="4" rx="1.5" fill="#fff" stroke="#1e2a8a" stroke-width="1"/><rect x="15.0" y="5.5" width="1" height="1" fill="#1e2a8a"/><rect x="1.5" y="10" width="4" height="4" rx="1.5" fill="#fff" stroke="#1e2a8a" stroke-width="1"/><rect x="3.0" y="11.5" width="1" height="1" fill="#1e2a8a"/><rect x="19.5" y="10" width="4" height="4" rx="1.5" fill="#fff" stroke="#1e2a8a" stroke-width="1"/><rect x="21.0" y="11.5" width="1" height="1" fill="#1e2a8a"/></svg>
<svg style="position:absolute;left:860px;top:64px" width="26" height="24" viewBox="0 0 26 24"><rect x="0" y="0" width="25" height="20" rx="2.2" fill="#111"/><rect x="2.5" y="18.5" width="7.5" height="4" rx="1.8" fill="#999" stroke="#111" stroke-width="1"/><rect x="6" y="1" width="1" height="2.5" fill="#fff"/><rect x="12" y="1" width="1" height="2.5" fill="#fff"/><rect x="18" y="1" width="1" height="2.5" fill="#fff"/><rect x="1" y="4" width="5" height="3" fill="#a6e6cb"/><rect x="7" y="4" width="5" height="3" fill="#a6e6cb"/><rect x="13" y="4" width="5" height="3" fill="#a6e6cb"/><rect x="19" y="4" width="5" height="3" fill="#a6e6cb"/><rect x="1" y="8" width="5" height="3" fill="#dcee62"/><rect x="7" y="8" width="5" height="3" fill="#dcee62"/><rect x="13" y="8" width="5" height="3" fill="#dcee62"/><rect x="19" y="8" width="5" height="3" fill="#dcee62"/><rect x="1" y="12" width="5" height="3" fill="#68c78c"/><rect x="7" y="12" width="5" height="3" fill="#68c78c"/><rect x="13" y="12" width="5" height="3" fill="#68c78c"/><rect x="19" y="12" width="5" height="3" fill="#68c78c"/><rect x="1" y="16" width="5" height="3" fill="#e9dcd8"/><rect x="7" y="16" width="5" height="3" fill="#e9dcd8"/><rect x="13" y="16" width="5" height="3" fill="#e9dcd8"/><rect x="19" y="16" width="5" height="3" fill="#e9dcd8"/></svg>
<svg style="position:absolute;left:912px;top:61px" width="32" height="30" viewBox="0 0 32 30"><rect x="0" y="1" width="19" height="16" rx="2" fill="#111"/><rect x="2.5" y="15.5" width="7" height="3.5" rx="1.6" fill="#aab" stroke="#111" stroke-width="1"/><rect x="6" y="2" width="1" height="2.5" fill="#fff"/><rect x="12" y="2" width="1" height="2.5" fill="#fff"/><rect x="1" y="5" width="5" height="3" fill="#f8f0ea"/><rect x="7" y="5" width="5" height="3" fill="#f8f0ea"/><rect x="13" y="5" width="5" height="3" fill="#f8f0ea"/><rect x="1" y="9" width="5" height="3" fill="#fff"/><rect x="7" y="9" width="5" height="3" fill="#f4ece4"/><rect x="13" y="9" width="5" height="3" fill="#fff"/><rect x="1" y="13" width="5" height="3" fill="#fff"/><rect x="7" y="13" width="5" height="3" fill="#fff"/><rect x="13" y="13" width="5" height="3" fill="#fff"/><rect x="11" y="10" width="19" height="16" rx="2" fill="#111"/><rect x="13.5" y="24.5" width="7" height="3.5" rx="1.6" fill="#aab" stroke="#111" stroke-width="1"/><rect x="17" y="11" width="1" height="2.5" fill="#fff"/><rect x="23" y="11" width="1" height="2.5" fill="#fff"/><rect x="12" y="14" width="5" height="3" fill="#eedde8"/><rect x="18" y="14" width="5" height="3" fill="#fff"/><rect x="24" y="14" width="5" height="3" fill="#fff"/><rect x="12" y="18" width="5" height="3" fill="#fff"/><rect x="18" y="18" width="5" height="3" fill="#f0e4e4"/><rect x="24" y="18" width="5" height="3" fill="#fff"/><rect x="12" y="22" width="5" height="3" fill="#fff"/><rect x="18" y="22" width="5" height="3" fill="#fff"/><rect x="24" y="22" width="5" height="3" fill="#eedede"/><path d="M21,2.5 H27 V5" fill="none" stroke="#1a2ab0" stroke-width="2"/><polygon points="24.3,5 30,5 27.1,8.5" fill="#1a2ab0"/><path d="M8,27.3 H3 V24" fill="none" stroke="#1a2ab0" stroke-width="2"/><polygon points="0,24.5 6,24.5 3,21" fill="#1a2ab0"/></svg>
<svg style="position:absolute;left:969px;top:64px" width="27" height="23" viewBox="0 0 27 23"><rect x="1" y="1" width="24" height="19.7" fill="#fff" stroke="#111" stroke-width="2"/><rect x="3.2" y="3.2" width="4.7" height="2.5" fill="#7e1c24"/><rect x="10.100000000000001" y="3.2" width="4.7" height="2.5" fill="#7e1c24"/><rect x="17.0" y="3.2" width="4.7" height="2.5" fill="#7e1c24"/><rect x="3.2" y="8.1" width="1.8" height="2" fill="#111"/><rect x="7.1" y="8.1" width="14.9" height="2" fill="#111"/><rect x="3.2" y="12.1" width="1.8" height="2" fill="#111"/><rect x="7.1" y="12.1" width="9.8" height="2" fill="#111"/><rect x="3.2" y="16" width="1.8" height="2" fill="#111"/><rect x="7.1" y="16" width="14.9" height="2" fill="#111"/></svg>
<svg style="position:absolute;left:1097px;top:61px" width="28" height="27" viewBox="0 0 28 27"><g transform="translate(2,3)"><rect x="0" y="0" width="25" height="20" rx="2.2" fill="#7a7a7a"/><rect x="2.5" y="18.5" width="7.5" height="4" rx="1.8" fill="#bbb" stroke="#7a7a7a" stroke-width="1"/><rect x="6" y="1" width="1" height="2.5" fill="#fff"/><rect x="12" y="1" width="1" height="2.5" fill="#fff"/><rect x="18" y="1" width="1" height="2.5" fill="#fff"/><rect x="1" y="4" width="5" height="3" fill="#fff"/><rect x="7" y="4" width="5" height="3" fill="#fff"/><rect x="13" y="4" width="5" height="3" fill="#fff"/><rect x="19" y="4" width="5" height="3" fill="#fff"/><rect x="1" y="8" width="5" height="3" fill="#fff"/><rect x="7" y="8" width="5" height="3" fill="#fff"/><rect x="13" y="8" width="5" height="3" fill="#fff"/><rect x="19" y="8" width="5" height="3" fill="#fff"/><rect x="1" y="12" width="5" height="3" fill="#fff"/><rect x="7" y="12" width="5" height="3" fill="#fff"/><rect x="13" y="12" width="5" height="3" fill="#fff"/><rect x="19" y="12" width="5" height="3" fill="#fff"/><rect x="1" y="16" width="5" height="3" fill="#fff"/><rect x="7" y="16" width="5" height="3" fill="#fff"/><rect x="13" y="16" width="5" height="3" fill="#fff"/><rect x="19" y="16" width="5" height="3" fill="#fff"/></g><circle cx="7.4" cy="7.3" r="6.6" fill="#ececec" stroke="#7a7a7a" stroke-width="1.5"/><path d="M5,4.8 Q9.5,4 10,9.8" fill="none" stroke="#6a6a6a" stroke-width="1.6"/><polygon points="2.8,5.6 6.3,2.4 6.6,7.4" fill="#6a6a6a"/></svg>
<svg style="position:absolute;left:1154px;top:64px" width="24" height="24" viewBox="0 0 24 24"><rect width="24" height="24" fill="#1a9fe0"/><text x="12.2" y="20" font-family="Liberation Sans" font-weight="bold" font-size="20.5" fill="#fff" text-anchor="middle">?</text></svg>
<svg style="position:absolute;left:1247px;top:133px" width="12" height="8" viewBox="0 0 12 8"><path d="M1.5,6.5 L6,2 L10.5,6.5" fill="none" stroke="#555" stroke-width="1.5"/></svg>
<svg style="position:absolute;left:70.0px;top:116.7px" width="6" height="4" viewBox="0 0 6 4"><polygon points="0.5,0.5 5.5,0.5 3.0,3" fill="#666"/></svg>
<svg style="position:absolute;left:197.5px;top:116.7px" width="6" height="4" viewBox="0 0 6 4"><polygon points="0.5,0.5 5.5,0.5 3.0,3" fill="#666"/></svg>
<svg style="position:absolute;left:258.0px;top:116.7px" width="6" height="4" viewBox="0 0 6 4"><polygon points="0.5,0.5 5.5,0.5 3.0,3" fill="#666"/></svg>
<svg style="position:absolute;left:308.8px;top:116.7px" width="6" height="4" viewBox="0 0 6 4"><polygon points="0.5,0.5 5.5,0.5 3.0,3" fill="#666"/></svg>
<svg style="position:absolute;left:350.8px;top:116.7px" width="6" height="4" viewBox="0 0 6 4"><polygon points="0.5,0.5 5.5,0.5 3.0,3" fill="#666"/></svg>
<svg style="position:absolute;left:393.0px;top:116.7px" width="6" height="4" viewBox="0 0 6 4"><polygon points="0.5,0.5 5.5,0.5 3.0,3" fill="#666"/></svg>
<svg style="position:absolute;left:648.3px;top:116.7px" width="6" height="4" viewBox="0 0 6 4"><polygon points="0.5,0.5 5.5,0.5 3.0,3" fill="#666"/></svg>
<svg style="position:absolute;left:979.1px;top:116.7px" width="6" height="4" viewBox="0 0 6 4"><polygon points="0.5,0.5 5.5,0.5 3.0,3" fill="#666"/></svg>
<svg style="position:absolute;left:1162.2px;top:116.7px" width="6" height="4" viewBox="0 0 6 4"><polygon points="0.5,0.5 5.5,0.5 3.0,3" fill="#666"/></svg>
<svg style="position:absolute;left:501.0px;top:67.5px" width="6" height="4" viewBox="0 0 6 4"><polygon points="0.5,0.5 5.5,0.5 3.0,3" fill="#666"/></svg>
<svg style="position:absolute;left:520.5px;top:90.5px" width="6" height="4" viewBox="0 0 6 4"><polygon points="0.5,0.5 5.5,0.5 3.0,3" fill="#666"/></svg>
<svg style="position:absolute;left:618.4px;top:67.5px" width="6" height="4" viewBox="0 0 6 4"><polygon points="0.5,0.5 5.5,0.5 3.0,3" fill="#666"/></svg>
<svg style="position:absolute;left:597.8px;top:90.5px" width="6" height="4" viewBox="0 0 6 4"><polygon points="0.5,0.5 5.5,0.5 3.0,3" fill="#666"/></svg>
<svg style="position:absolute;left:604.0px;top:113.5px" width="6" height="4" viewBox="0 0 6 4"><polygon points="0.5,0.5 5.5,0.5 3.0,3" fill="#666"/></svg>
<svg style="position:absolute;left:739.7px;top:67.5px" width="6" height="4" viewBox="0 0 6 4"><polygon points="0.5,0.5 5.5,0.5 3.0,3" fill="#666"/></svg>
<svg style="position:absolute;left:759.6px;top:90.5px" width="6" height="4" viewBox="0 0 6 4"><polygon points="0.5,0.5 5.5,0.5 3.0,3" fill="#666"/></svg>
<svg style="position:absolute;left:739.7px;top:113.5px" width="6" height="4" viewBox="0 0 6 4"><polygon points="0.5,0.5 5.5,0.5 3.0,3" fill="#666"/></svg>
<svg style="position:absolute;left:1066.9px;top:67.5px" width="6" height="4" viewBox="0 0 6 4"><polygon points="0.5,0.5 5.5,0.5 3.0,3" fill="#666"/></svg>
<svg style="position:absolute;left:1069.9px;top:90.5px" width="6" height="4" viewBox="0 0 6 4"><polygon points="0.5,0.5 5.5,0.5 3.0,3" fill="#666"/></svg>
<svg style="position:absolute;left:1059.9px;top:113.5px" width="6" height="4" viewBox="0 0 6 4"><polygon points="0.5,0.5 5.5,0.5 3.0,3" fill="#666"/></svg>
<svg style="position:absolute;left:288px;top:166px" width="9" height="6" viewBox="0 0 9 6"><polygon points="0.5,0.5 8.5,0.5 4.5,5" fill="#777"/></svg>
<div style="position:absolute;left:317px;top:165px;width:2px;height:2px;background:#9a9a9a"></div>
<div style="position:absolute;left:317px;top:169px;width:2px;height:2px;background:#9a9a9a"></div>
<div style="position:absolute;left:317px;top:173px;width:2px;height:2px;background:#9a9a9a"></div>
<svg style="position:absolute;left:342px;top:162px" width="19" height="17" viewBox="0 0 19 17"><path d="M1.5,1.5 L16.5,15.5 M16.5,1.5 L1.5,15.5" stroke="#b3b3b3" stroke-width="2"/></svg>
<svg style="position:absolute;left:378px;top:162px" width="21" height="17" viewBox="0 0 21 17"><path d="M1.5,9 L7,15 L19.5,1.5" fill="none" stroke="#b3b3b3" stroke-width="2.4"/></svg>
<span id="t108" style="position:absolute;left:413.50px;top:161.42px;font:bold 19px/19px 'Liberation Serif',sans-serif;font-style:italic;color:#6d6d6d;white-space:pre;transform:scaleX(1.2500);transform-origin:0 0;">f</span>
<span id="t109" style="position:absolute;left:423.61px;top:164.80px;font:bold 15px/15px 'Liberation Serif',sans-serif;font-style:italic;color:#6d6d6d;white-space:pre;transform:scaleX(1.1111);transform-origin:0 0;">x</span>
<svg style="position:absolute;left:1247px;top:166px" width="14" height="11" viewBox="0 0 14 11"><path d="M2,2.5 L6.5,7.5 L11,2.5" fill="none" stroke="#666" stroke-width="3"/></svg>
<svg style="position:absolute;left:319px;top:200px" width="10" height="10" viewBox="0 0 10 10"><path d="M1.2,1.2 L8.8,8.8 M8.8,1.2 L1.2,8.8" stroke="#444" stroke-width="2"/></svg>
<svg style="position:absolute;left:339px;top:200px" width="11" height="9" viewBox="0 0 11 9"><path d="M5,1.2 L2,4.3 L5,7.4 M9.5,1.2 L6.5,4.3 L9.5,7.4" fill="none" stroke="#444" stroke-width="2"/></svg>
<svg style="position:absolute;left:369px;top:197px" width="14" height="13" viewBox="0 0 14 13"><polygon points="13,0.5 13,12.5 1,12.5" fill="#dcdcdc"/></svg>
<div style="position:absolute;left:357px;top:376px;width:2px;height:2px;background:#666"></div>
<div style="position:absolute;left:357px;top:380px;width:2px;height:2px;background:#666"></div>
<div style="position:absolute;left:357px;top:384px;width:2px;height:2px;background:#666"></div>
<div style="position:absolute;left:357px;top:389px;width:2px;height:2px;background:#666"></div>
<div style="position:absolute;left:357px;top:393px;width:2px;height:2px;background:#666"></div>
<svg style="position:absolute;left:1250px;top:199px" width="13" height="6" viewBox="0 0 13 6"><polygon points="3,4.5 10,4.5 6.5,1" fill="#666"/></svg>
<svg style="position:absolute;left:1250px;top:546px" width="13" height="7" viewBox="0 0 13 7"><polygon points="2,1 11,1 6.5,5.5" fill="#666"/></svg>
<svg style="position:absolute;left:925px;top:565px" width="8" height="10" viewBox="0 0 8 10"><polygon points="6,1 6,9 1.5,5" fill="#666"/></svg>
<svg style="position:absolute;left:1235px;top:565px" width="8" height="10" viewBox="0 0 8 10"><polygon points="2,1 2,9 6.5,5" fill="#666"/></svg>
<div style="position:absolute;left:904px;top:565px;width:2px;height:2px;background:#999"></div>
<div style="position:absolute;left:904px;top:569px;width:2px;height:2px;background:#999"></div>
<div style="position:absolute;left:904px;top:573px;width:2px;height:2px;background:#999"></div>
<svg style="position:absolute;left:386px;top:565px" width="7" height="10" viewBox="0 0 7 10"><polygon points="5.5,1 5.5,9 1,5" fill="#c6c6c6"/></svg>
<svg style="position:absolute;left:415px;top:565px" width="7" height="10" viewBox="0 0 7 10"><polygon points="1.5,1 1.5,9 6,5" fill="#c6c6c6"/></svg>
<svg style="position:absolute;left:752px;top:562px" width="18" height="17" viewBox="0 0 18 17"><circle cx="8.8" cy="8.3" r="7.3" fill="none" stroke="#666" stroke-width="1.3"/><path d="M8.8,4.3 V12.3 M4.8,8.3 H12.8" stroke="#666" stroke-width="1.8"/></svg>
<svg style="position:absolute;left:60px;top:587px" width="16" height="15" viewBox="0 0 16 15"><circle cx="4.5" cy="4" r="3.5" fill="#d8f0e0"/><path d="M8,2 H14 V13.5 H2 V8" fill="none" stroke="#d8f0e0" stroke-width="1.2"/><rect x="3.8" y="7.5" width="2.3" height="1.6" fill="#d8f0e0"/><rect x="3.8" y="10.5" width="2.3" height="1.6" fill="#d8f0e0"/><rect x="7.1" y="7.5" width="2.3" height="1.6" fill="#d8f0e0"/><rect x="7.1" y="10.5" width="2.3" height="1.6" fill="#d8f0e0"/><rect x="10.399999999999999" y="7.5" width="2.3" height="1.6" fill="#d8f0e0"/><rect x="10.399999999999999" y="10.5" width="2.3" height="1.6" fill="#d8f0e0"/></svg>
<svg style="position:absolute;left:975px;top:588px" width="15" height="14" viewBox="0 0 15 14"><path d="M1,1 H13.5 V13.5 H1 Z M5.2,1 V13.5 M9.4,1 V13.5 M1,5.2 H13.5 M1,9.4 H13.5" fill="none" stroke="#e8f3ec" stroke-width="1.2"/></svg>
<svg style="position:absolute;left:1013px;top:588px" width="16" height="14" viewBox="0 0 16 14"><rect x="1" y="1" width="13.5" height="12" fill="none" stroke="#e8f3ec" stroke-width="1.2"/><rect x="3.5" y="3.5" width="8.5" height="7" fill="none" stroke="#e8f3ec" stroke-width="1"/><path d="M5,5.5 H10.5 M5,7 H10.5 M5,8.5 H10.5" stroke="#e8f3ec" stroke-width="0.8"/></svg>
<svg style="position:absolute;left:1051px;top:588px" width="16" height="14" viewBox="0 0 16 14"><rect x="1" y="1" width="13.5" height="12" fill="none" stroke="#e8f3ec" stroke-width="1.2"/><rect x="1" y="1" width="5" height="7" fill="#e8f3ec"/><rect x="7.8" y="1" width="3.5" height="7" fill="#e8f3ec"/></svg>
<div style="position:absolute;left:1083px;top:593px;width:6px;height:2px;background:#e8f3ec"></div>
<div style="position:absolute;left:1093px;top:593px;width:100px;height:1px;background:#e8f3ec"></div>
<div style="position:absolute;left:1141px;top:589px;width:4px;height:11px;background:#e8f3ec"></div>
<svg style="position:absolute;left:1196px;top:589px" width="10" height="10" viewBox="0 0 10 10"><path d="M5,0.5 V9.5 M0.5,5 H9.5" stroke="#e8f3ec" stroke-width="2"/></svg>
<div style="position:absolute;left:0px;top:0px;width:1268px;height:1px;background:#2a5040"></div>
<div style="position:absolute;left:0px;top:0px;width:1px;height:607px;background:#2a5040"></div>
<div style="position:absolute;left:1267px;top:0px;width:1px;height:607px;background:#2a5040"></div>
</body></html>
